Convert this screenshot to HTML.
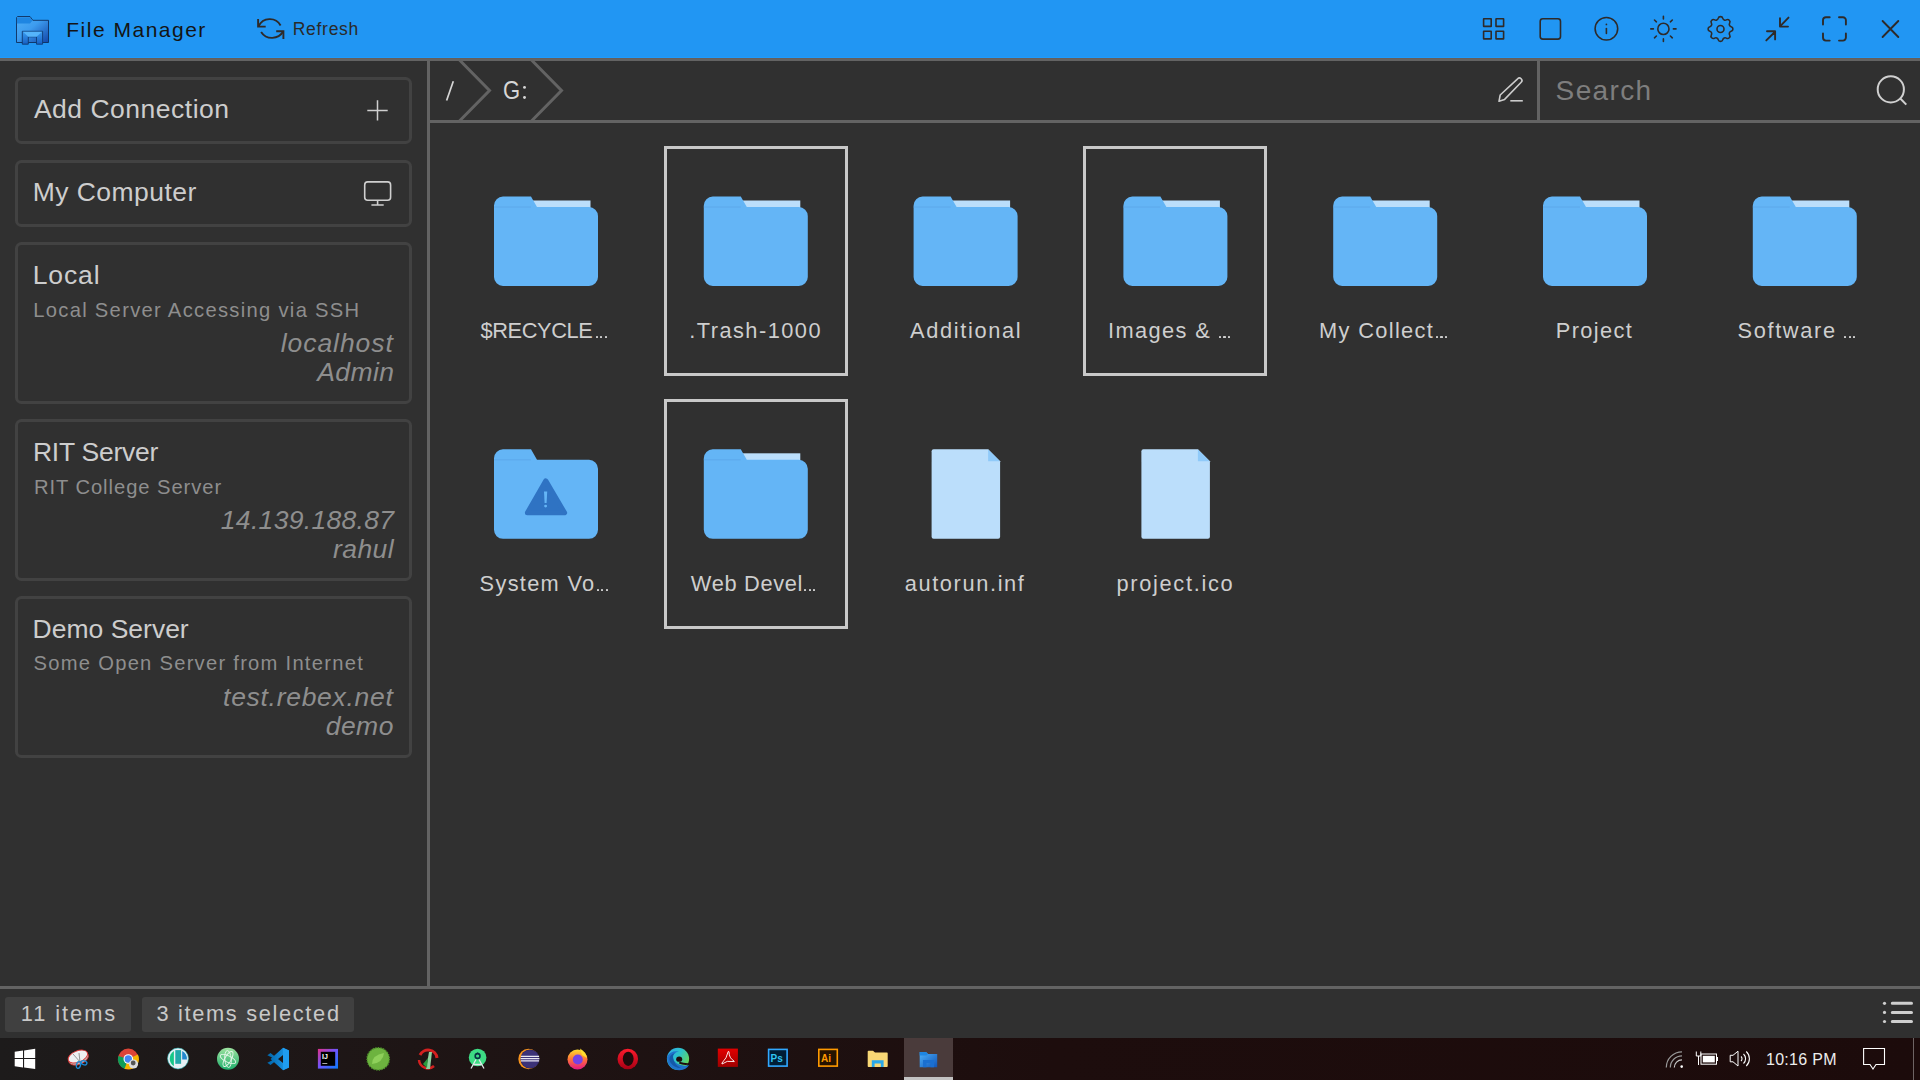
<!DOCTYPE html>
<html><head><meta charset="utf-8"><style>
html,body{margin:0;padding:0;width:1920px;height:1080px;overflow:hidden;background:#303030;font-family:"Liberation Sans", sans-serif;}
.t{position:absolute;white-space:pre;}
svg{position:absolute;overflow:visible;}
</style></head><body>
<div style="position:absolute;left:0px;top:0px;width:1920px;height:58px;background:#2196f3"></div>
<div style="position:absolute;left:0px;top:57px;width:1920px;height:1px;background:#1e9bfd"></div>
<div style="position:absolute;left:0px;top:58px;width:1920px;height:1px;background:#665e5a"></div>
<div style="position:absolute;left:0px;top:59px;width:1920px;height:2px;background:#636363"></div>
<svg style="left:12px;top:12px;" width="42" height="36" viewBox="12 12 42 36">
<defs>
<linearGradient id="lg1" x1="0" y1="0" x2="1" y2="1"><stop offset="0" stop-color="#4fb0f7"/><stop offset="0.45" stop-color="#3d9cef"/><stop offset="1" stop-color="#1245a8"/></linearGradient>
<linearGradient id="lg2" x1="0" y1="0" x2="0" y2="1"><stop offset="0" stop-color="#3a9cf0"/><stop offset="1" stop-color="#1760c4"/></linearGradient>
</defs>
<path d="M16.5 17.5 L17.5 16.5 L30 16.5 L32.8 20.3 L48.5 20.3 L48.5 42.5 L16.5 42.5 Z" fill="url(#lg1)" stroke="#0d2f5e" stroke-width="0.9"/>
<path d="M16.9 17.2 L30 17.2 L32.5 20.5 L30 23.5 L16.9 23.5 Z" fill="#1e86e2"/>
<path d="M22.3 31.3 L42.6 31.3 L42.6 44.2 L36.5 44.2 L36.5 36.8 L28.3 36.8 L28.3 44.2 L22.3 44.2 Z" fill="url(#lg2)" stroke="#0e3a73" stroke-width="0.9"/>
<path d="M23 31.8 L42 31.8 L36.5 36.8 L28.3 36.8 Z" fill="#55b4fb"/>
</svg>
<div class="t" style="left:66.3px;top:18.60px;font-size:21px;line-height:21px;color:#141414;letter-spacing:1.5px;">File Manager</div>
<svg style="left:254px;top:15px;" width="34" height="28" viewBox="254 15 34 28">
<g fill="none" stroke="#2e2a29" stroke-width="1.9" stroke-linecap="butt">
<path d="M258.6 26.4 A12.3 12.3 0 0 1 280.6 25.5"/>
<path d="M261.1 31.9 A13 13 0 0 0 283.3 31.3"/>
<path d="M258.1 18.9 V26.6 H265.7"/>
<path d="M276.2 31.3 H283.4 V38.9"/>
</g></svg>
<div class="t" style="left:292.75px;top:21.00px;font-size:17.5px;line-height:17.5px;color:#2a2a2a;letter-spacing:0.708px;">Refresh</div>
<svg style="left:1478px;top:12px;" width="440" height="36" viewBox="1478 12 440 36">
<g fill="none" stroke="#2e2a29" stroke-width="1.6" stroke-linecap="round" stroke-linejoin="round">
<rect x="1483.6" y="18.8" width="7.6" height="7.6" rx="0.2"/>
<rect x="1496" y="18.8" width="7.6" height="7.6" rx="0.2"/>
<rect x="1483.6" y="31.3" width="7.6" height="7.6" rx="0.2"/>
<rect x="1496" y="31.3" width="7.6" height="7.6" rx="0.2"/>
<rect x="1540.2" y="18.8" width="20.3" height="20.3" rx="2.6"/>
<circle cx="1606.4" cy="28.75" r="11.3"/>
<path d="M1606.4 28.6 V33.5"/>
<circle cx="1663.4" cy="28.9" r="5.6"/>
<path d="M1663.4 16.3 V18.9 M1663.4 38.9 V41.5 M1650.8 28.9 H1653.4 M1673.4 28.9 H1676 M1654.5 20 L1656.4 21.8 M1670.4 36 L1672.3 37.8 M1654.5 37.8 L1656.4 36 M1670.4 21.8 L1672.3 20"/>
<circle cx="1720.5" cy="29" r="3.5"/>
</g>
<circle cx="1606.4" cy="24.4" r="0.85" fill="#2e2a29"/>
<g fill="none" stroke="#2e2a29" stroke-width="1.9" stroke-linecap="round" stroke-linejoin="round">
<path d="M1788.5 17.6 L1780.5 25.8 M1780 18.3 V26.6 H1788"/>
<path d="M1766.3 40.4 L1774.6 32.2 M1767 31.3 H1775.1 V39.4"/>
<path d="M1823 24.5 V20 A3 3 0 0 1 1826 17.2 H1829.7 M1839 17.2 H1842.8 A3 3 0 0 1 1845.9 20.3 V24.5 M1845.9 33.5 V37.6 A3 3 0 0 1 1842.8 40.6 H1839 M1829.7 40.6 H1826 A3 3 0 0 1 1823 37.6 V33.5"/>
<path d="M1882.6 21 L1898.3 37 M1898.3 21 L1882.6 37"/>
</g>
</svg>
<svg style="left:1700px;top:10px;" width="40" height="40" viewBox="1700 10 40 40"><g transform="translate(1720.5 29) scale(1.38) translate(-12 -12)"><path vector-effect="non-scaling-stroke" d="M10.325 4.317c.426 -1.756 2.924 -1.756 3.35 0a1.724 1.724 0 0 0 2.573 1.066c1.543 -.94 3.31 .826 2.37 2.37a1.724 1.724 0 0 0 1.065 2.572c1.756 .426 1.756 2.924 0 3.35a1.724 1.724 0 0 0 -1.066 2.573c.94 1.543 -.826 3.31 -2.37 2.37a1.724 1.724 0 0 0 -2.572 1.065c-.426 1.756 -2.924 1.756 -3.35 0a1.724 1.724 0 0 0 -2.573 -1.066c-1.543 .94 -3.31 -.826 -2.37 -2.37a1.724 1.724 0 0 0 -1.065 -2.572c-1.756 -.426 -1.756 -2.924 0 -3.35a1.724 1.724 0 0 0 1.066 -2.573c-.94 -1.543 .826 -3.31 2.37 -2.37c1 .608 2.296 .07 2.572 -1.065z" fill="none" stroke="#2e2a29" stroke-width="1.6"/></g></svg>
<div style="position:absolute;left:427px;top:61px;width:3px;height:925px;background:#636363"></div>
<div style="position:absolute;left:15px;top:77px;width:397px;height:67px;box-sizing:border-box;border:3px solid #424242;border-radius:6.5px;"></div>
<div style="position:absolute;left:15px;top:160px;width:397px;height:67px;box-sizing:border-box;border:3px solid #424242;border-radius:6.5px;"></div>
<div style="position:absolute;left:15px;top:242px;width:397px;height:162px;box-sizing:border-box;border:3px solid #424242;border-radius:6.5px;"></div>
<div style="position:absolute;left:15px;top:419px;width:397px;height:162px;box-sizing:border-box;border:3px solid #424242;border-radius:6.5px;"></div>
<div style="position:absolute;left:15px;top:596px;width:397px;height:162px;box-sizing:border-box;border:3px solid #424242;border-radius:6.5px;"></div>
<div class="t" style="left:33.9px;top:96.01px;font-size:26.5px;line-height:26.5px;color:#cdcdcd;letter-spacing:0.508px;">Add Connection</div>
<div class="t" style="left:32.7px;top:179.01px;font-size:26.5px;line-height:26.5px;color:#cdcdcd;letter-spacing:0.46px;">My Computer</div>
<div class="t" style="left:32.7px;top:262.01px;font-size:26.5px;line-height:26.5px;color:#cdcdcd;letter-spacing:0.9px;">Local</div>
<div class="t" style="left:33.2px;top:300.01px;font-size:20.2px;line-height:20.2px;color:#8e8e8e;letter-spacing:1.297px;">Local Server Accessing via SSH</div>
<div class="t" style="left:280.8px;top:330.01px;font-size:26.5px;line-height:26.5px;color:#8e8e8e;letter-spacing:0.925px;font-style:italic;">localhost</div>
<div class="t" style="left:317.3px;top:359.01px;font-size:26.5px;line-height:26.5px;color:#8e8e8e;letter-spacing:0.375px;font-style:italic;">Admin</div>
<div class="t" style="left:32.9px;top:439.01px;font-size:26.5px;line-height:26.5px;color:#cdcdcd;letter-spacing:-0.244px;">RIT Server</div>
<div class="t" style="left:33.9px;top:477.01px;font-size:20.2px;line-height:20.2px;color:#8e8e8e;letter-spacing:0.941px;">RIT College Server</div>
<div class="t" style="left:220.8px;top:507.01px;font-size:26.5px;line-height:26.5px;color:#8e8e8e;letter-spacing:0.317px;font-style:italic;">14.139.188.87</div>
<div class="t" style="left:332.9px;top:536.01px;font-size:26.5px;line-height:26.5px;color:#8e8e8e;letter-spacing:0.475px;font-style:italic;">rahul</div>
<div class="t" style="left:32.6px;top:616.01px;font-size:26.5px;line-height:26.5px;color:#cdcdcd;letter-spacing:0.0px;">Demo Server</div>
<div class="t" style="left:33.6px;top:653.01px;font-size:20.2px;line-height:20.2px;color:#8e8e8e;letter-spacing:1.252px;">Some Open Server from Internet</div>
<div class="t" style="left:223.1px;top:684.01px;font-size:26.5px;line-height:26.5px;color:#8e8e8e;letter-spacing:0.7px;font-style:italic;">test.rebex.net</div>
<div class="t" style="left:325.7px;top:713.01px;font-size:26.5px;line-height:26.5px;color:#8e8e8e;letter-spacing:0.467px;font-style:italic;">demo</div>
<svg style="left:360px;top:95px;" width="35" height="35" viewBox="360 95 35 35"><path d="M367.3 110.6 H387.7 M377.5 100.3 V120.6" stroke="#cfcfcf" stroke-width="1.5" fill="none"/></svg>
<svg style="left:358px;top:175px;" width="40" height="35" viewBox="358 175 40 35"><g fill="none" stroke="#cfcfcf" stroke-width="1.6"><rect x="364.7" y="181.9" width="25.9" height="18.4" rx="3"/><path d="M377.6 200.3 V205 M371.4 205 H383.7"/></g></svg>
<div style="position:absolute;left:430px;top:120px;width:1490px;height:3px;background:#636363"></div>
<div style="position:absolute;left:1537px;top:61px;width:3px;height:59px;background:#636363"></div>
<svg style="left:430px;top:61px;" width="200" height="60" viewBox="430 61 200 60"><g fill="none" stroke="#636363" stroke-width="3" stroke-linejoin="miter"><path d="M459.5 60 L489.5 90.5 L459.5 121"/><path d="M531.5 60 L561.5 90.5 L531.5 121"/></g></svg>
<div class="t" style="left:502.8px;top:77.90px;font-size:25px;line-height:25px;color:#d6d6d6;letter-spacing:0.0px;transform:scaleX(0.88);transform-origin:1px 0;">G</div>
<svg style="left:440px;top:75px;" width="95" height="30" viewBox="440 75 95 30"><path d="M446.6 100.5 L453.3 81.3" stroke="#d6d6d6" stroke-width="1.7"/><circle cx="524.5" cy="87.4" r="1.45" fill="#d6d6d6"/><circle cx="524.5" cy="97.5" r="1.45" fill="#d6d6d6"/></svg>
<svg style="left:1494px;top:74px;" width="34" height="34" viewBox="1494 74 34 34"><g fill="none" stroke="#cccccc" stroke-width="1.6" stroke-linejoin="round" stroke-linecap="butt"><path d="M1499 101.3 L1500.2 95 L1517.6 78.8 A2.1 2.1 0 0 1 1521.2 82.3 L1504.6 99.4 Z"/><path d="M1510.3 100.8 H1522.8"/></g></svg>
<div class="t" style="left:1555.6px;top:76.81px;font-size:28px;line-height:28px;color:#7e7e7e;letter-spacing:1.36px;">Search</div>
<svg style="left:1870px;top:70px;" width="45" height="45" viewBox="1870 70 45 45"><g fill="none" stroke="#d0d0d0" stroke-width="2"><circle cx="1890.8" cy="89.4" r="13.1"/><path d="M1900.3 98.5 L1906.3 104.6"/></g></svg>
<svg style="left:430px;top:123px;" width="1490" height="520" viewBox="430 123 1490 520"><g>
<rect x="531.0" y="200.5" width="59.5" height="20" fill="#bbdefb"/>
<path d="M503.0 196.5 H531.0 L537.0 207.0 H589.0 A9 9 0 0 1 598.0 216.0 V277.0 A9 9 0 0 1 589.0 286.0 H503.0 A9 9 0 0 1 494.0 277.0 V205.5 A9 9 0 0 1 503.0 196.5 Z" fill="#64b5f6"/>
<path d="M494.0 207.0 H531.0" stroke="#5aa6e8" stroke-width="0.8"/>
</g><g>
<rect x="740.8" y="200.5" width="59.5" height="20" fill="#bbdefb"/>
<path d="M712.8 196.5 H740.8 L746.8 207.0 H798.8 A9 9 0 0 1 807.8 216.0 V277.0 A9 9 0 0 1 798.8 286.0 H712.8 A9 9 0 0 1 703.8 277.0 V205.5 A9 9 0 0 1 712.8 196.5 Z" fill="#64b5f6"/>
<path d="M703.8 207.0 H740.8" stroke="#5aa6e8" stroke-width="0.8"/>
</g><g>
<rect x="950.6" y="200.5" width="59.5" height="20" fill="#bbdefb"/>
<path d="M922.6 196.5 H950.6 L956.6 207.0 H1008.6 A9 9 0 0 1 1017.6 216.0 V277.0 A9 9 0 0 1 1008.6 286.0 H922.6 A9 9 0 0 1 913.6 277.0 V205.5 A9 9 0 0 1 922.6 196.5 Z" fill="#64b5f6"/>
<path d="M913.6 207.0 H950.6" stroke="#5aa6e8" stroke-width="0.8"/>
</g><g>
<rect x="1160.4" y="200.5" width="59.5" height="20" fill="#bbdefb"/>
<path d="M1132.4 196.5 H1160.4 L1166.4 207.0 H1218.4 A9 9 0 0 1 1227.4 216.0 V277.0 A9 9 0 0 1 1218.4 286.0 H1132.4 A9 9 0 0 1 1123.4 277.0 V205.5 A9 9 0 0 1 1132.4 196.5 Z" fill="#64b5f6"/>
<path d="M1123.4 207.0 H1160.4" stroke="#5aa6e8" stroke-width="0.8"/>
</g><g>
<rect x="1370.2" y="200.5" width="59.5" height="20" fill="#bbdefb"/>
<path d="M1342.2 196.5 H1370.2 L1376.2 207.0 H1428.2 A9 9 0 0 1 1437.2 216.0 V277.0 A9 9 0 0 1 1428.2 286.0 H1342.2 A9 9 0 0 1 1333.2 277.0 V205.5 A9 9 0 0 1 1342.2 196.5 Z" fill="#64b5f6"/>
<path d="M1333.2 207.0 H1370.2" stroke="#5aa6e8" stroke-width="0.8"/>
</g><g>
<rect x="1580.0" y="200.5" width="59.5" height="20" fill="#bbdefb"/>
<path d="M1552.0 196.5 H1580.0 L1586.0 207.0 H1638.0 A9 9 0 0 1 1647.0 216.0 V277.0 A9 9 0 0 1 1638.0 286.0 H1552.0 A9 9 0 0 1 1543.0 277.0 V205.5 A9 9 0 0 1 1552.0 196.5 Z" fill="#64b5f6"/>
<path d="M1543.0 207.0 H1580.0" stroke="#5aa6e8" stroke-width="0.8"/>
</g><g>
<rect x="1789.8" y="200.5" width="59.5" height="20" fill="#bbdefb"/>
<path d="M1761.8000000000002 196.5 H1789.8000000000002 L1795.8000000000002 207.0 H1847.8000000000002 A9 9 0 0 1 1856.8000000000002 216.0 V277.0 A9 9 0 0 1 1847.8000000000002 286.0 H1761.8000000000002 A9 9 0 0 1 1752.8000000000002 277.0 V205.5 A9 9 0 0 1 1761.8000000000002 196.5 Z" fill="#64b5f6"/>
<path d="M1752.8000000000002 207.0 H1789.8000000000002" stroke="#5aa6e8" stroke-width="0.8"/>
</g><g>

<path d="M503 449.3 H531 L537 459.8 H589 A9 9 0 0 1 598 468.8 V529.8 A9 9 0 0 1 589 538.8 H503 A9 9 0 0 1 494 529.8 V458.3 A9 9 0 0 1 503 449.3 Z" fill="#64b5f6"/>
<path d="M494 459.8 H531" stroke="#5aa6e8" stroke-width="0.8"/>
<path d="M545.8 480.8 L564.6 512.8 L527.4 512.8 Z" fill="#2f73c3" stroke="#2f73c3" stroke-width="5" stroke-linejoin="round"/><path d="M544 491.40000000000003 H547.2 L546.6 503.0 H544.6 Z" fill="#64b5f6"/><circle cx="545.6" cy="506.1" r="1.45" fill="#64b5f6"/></g><g>
<rect x="740.8" y="453.3" width="59.5" height="20" fill="#bbdefb"/>
<path d="M712.8 449.3 H740.8 L746.8 459.8 H798.8 A9 9 0 0 1 807.8 468.8 V529.8 A9 9 0 0 1 798.8 538.8 H712.8 A9 9 0 0 1 703.8 529.8 V458.3 A9 9 0 0 1 712.8 449.3 Z" fill="#64b5f6"/>
<path d="M703.8 459.8 H740.8" stroke="#5aa6e8" stroke-width="0.8"/>
</g><path d="M933.6 449.3 H988.1 L1000.1 461.3 V536.8 A2 2 0 0 1 998.1 538.8 H933.6 A2 2 0 0 1 931.6 536.8 V451.3 A2 2 0 0 1 933.6 449.3 Z" fill="#bbdefb"/><path d="M988.1 449.3 L1000.1 461.3 H988.1 Z" fill="#90caf9"/><path d="M1143.4 449.3 H1197.9 L1209.9 461.3 V536.8 A2 2 0 0 1 1207.9 538.8 H1143.4 A2 2 0 0 1 1141.4 536.8 V451.3 A2 2 0 0 1 1143.4 449.3 Z" fill="#bbdefb"/><path d="M1197.9 449.3 L1209.9 461.3 H1197.9 Z" fill="#90caf9"/></svg>
<div style="position:absolute;left:664px;top:146px;width:184px;height:230px;box-sizing:border-box;border:3px solid #c8c8c8;"></div>
<div style="position:absolute;left:1083px;top:146px;width:184px;height:230px;box-sizing:border-box;border:3px solid #c8c8c8;"></div>
<div style="position:absolute;left:664px;top:399px;width:184px;height:230px;box-sizing:border-box;border:3px solid #c8c8c8;"></div>
<div class="t" style="left:480.4px;top:320.00px;font-size:21.8px;line-height:21.8px;color:#cecece;letter-spacing:-0.371px;">$RECYCLE</div>
<div style="position:absolute;left:595.60px;top:335.60px;width:2.3px;height:2.3px;border-radius:0.6px;background:#cecece"></div>
<div style="position:absolute;left:600.05px;top:335.60px;width:2.3px;height:2.3px;border-radius:0.6px;background:#cecece"></div>
<div style="position:absolute;left:604.50px;top:335.60px;width:2.3px;height:2.3px;border-radius:0.6px;background:#cecece"></div>
<div class="t" style="left:689.2px;top:320.00px;font-size:21.8px;line-height:21.8px;color:#cecece;letter-spacing:1.46px;">.Trash-1000</div>
<div class="t" style="left:910.0px;top:320.00px;font-size:21.8px;line-height:21.8px;color:#cecece;letter-spacing:1.656px;">Additional</div>
<div class="t" style="left:1108.0px;top:320.00px;font-size:21.8px;line-height:21.8px;color:#cecece;letter-spacing:1.386px;">Images &amp;</div>
<div style="position:absolute;left:1219.00px;top:335.60px;width:2.3px;height:2.3px;border-radius:0.6px;background:#cecece"></div>
<div style="position:absolute;left:1223.45px;top:335.60px;width:2.3px;height:2.3px;border-radius:0.6px;background:#cecece"></div>
<div style="position:absolute;left:1227.90px;top:335.60px;width:2.3px;height:2.3px;border-radius:0.6px;background:#cecece"></div>
<div class="t" style="left:1319.1px;top:320.00px;font-size:21.8px;line-height:21.8px;color:#cecece;letter-spacing:1.333px;">My Collect</div>
<div style="position:absolute;left:1435.80px;top:335.60px;width:2.3px;height:2.3px;border-radius:0.6px;background:#cecece"></div>
<div style="position:absolute;left:1440.25px;top:335.60px;width:2.3px;height:2.3px;border-radius:0.6px;background:#cecece"></div>
<div style="position:absolute;left:1444.70px;top:335.60px;width:2.3px;height:2.3px;border-radius:0.6px;background:#cecece"></div>
<div class="t" style="left:1555.8px;top:320.00px;font-size:21.8px;line-height:21.8px;color:#cecece;letter-spacing:1.367px;">Project</div>
<div class="t" style="left:1737.5px;top:320.00px;font-size:21.8px;line-height:21.8px;color:#cecece;letter-spacing:1.643px;">Software</div>
<div style="position:absolute;left:1844.20px;top:335.60px;width:2.3px;height:2.3px;border-radius:0.6px;background:#cecece"></div>
<div style="position:absolute;left:1848.65px;top:335.60px;width:2.3px;height:2.3px;border-radius:0.6px;background:#cecece"></div>
<div style="position:absolute;left:1853.10px;top:335.60px;width:2.3px;height:2.3px;border-radius:0.6px;background:#cecece"></div>
<div class="t" style="left:479.6px;top:573.00px;font-size:21.8px;line-height:21.8px;color:#cecece;letter-spacing:1.3px;">System Vo</div>
<div style="position:absolute;left:596.70px;top:588.60px;width:2.3px;height:2.3px;border-radius:0.6px;background:#cecece"></div>
<div style="position:absolute;left:601.15px;top:588.60px;width:2.3px;height:2.3px;border-radius:0.6px;background:#cecece"></div>
<div style="position:absolute;left:605.60px;top:588.60px;width:2.3px;height:2.3px;border-radius:0.6px;background:#cecece"></div>
<div class="t" style="left:690.8px;top:573.00px;font-size:21.8px;line-height:21.8px;color:#cecece;letter-spacing:0.681px;">Web Devel</div>
<div style="position:absolute;left:804.20px;top:588.60px;width:2.3px;height:2.3px;border-radius:0.6px;background:#cecece"></div>
<div style="position:absolute;left:808.65px;top:588.60px;width:2.3px;height:2.3px;border-radius:0.6px;background:#cecece"></div>
<div style="position:absolute;left:813.10px;top:588.60px;width:2.3px;height:2.3px;border-radius:0.6px;background:#cecece"></div>
<div class="t" style="left:904.7px;top:573.00px;font-size:21.8px;line-height:21.8px;color:#cecece;letter-spacing:1.62px;">autorun.inf</div>
<div class="t" style="left:1116.5px;top:573.00px;font-size:21.8px;line-height:21.8px;color:#cecece;letter-spacing:1.68px;">project.ico</div>
<div style="position:absolute;left:0px;top:986px;width:1920px;height:3px;background:#636363"></div>
<div style="position:absolute;left:5px;top:997px;width:126px;height:35px;background:#404040;border-radius:3px"></div>
<div style="position:absolute;left:142px;top:997px;width:212px;height:35px;background:#404040;border-radius:3px"></div>
<div class="t" style="left:20.8px;top:1003.00px;font-size:21.8px;line-height:21.8px;color:#c8c8c8;letter-spacing:1.943px;">11 items</div>
<div class="t" style="left:156.5px;top:1003.00px;font-size:21.8px;line-height:21.8px;color:#c8c8c8;letter-spacing:1.667px;">3 items selected</div>
<svg style="left:1875px;top:1000px;" width="40" height="30" viewBox="1875 1000 40 30"><g fill="#cfcfcf"><circle cx="1884.5" cy="1003.3" r="1.6"/><circle cx="1884.5" cy="1012.4" r="1.6"/><circle cx="1884.5" cy="1021.5" r="1.6"/></g><g stroke="#cfcfcf" stroke-width="3" stroke-linecap="round"><path d="M1892.3 1003.3 H1911.5 M1892.3 1012.4 H1911.5 M1892.3 1021.5 H1911.5"/></g></svg>
<div style="position:absolute;left:0px;top:1038px;width:1920px;height:42px;background:linear-gradient(90deg,#1d1b1b 0%,#1e1414 25%,#1d0d0d 55%,#1c0b0b 100%)"></div>
<div style="position:absolute;left:904px;top:1038px;width:49px;height:42px;background:#4a3b3b"></div>
<div style="position:absolute;left:904px;top:1077px;width:49px;height:3px;background:#c3c3c3"></div>
<div class="t" style="left:1766.0px;top:1052.00px;font-size:16px;line-height:16px;color:#ededed;letter-spacing:0.286px;">10:16 PM</div>
<svg style="left:0px;top:1038px;" width="1920" height="42" viewBox="0 1038 1920 42">
<defs>
<linearGradient id="tbvs" x1="0" y1="0" x2="1" y2="0"><stop offset="0" stop-color="#0065a9"/><stop offset="1" stop-color="#1f9cf0"/></linearGradient>
<linearGradient id="tbij" x1="0" y1="0" x2="1" y2="1"><stop offset="0" stop-color="#e0318a"/><stop offset="0.5" stop-color="#6b57ff"/><stop offset="1" stop-color="#087cfa"/></linearGradient>
<linearGradient id="tbat" x1="0" y1="0" x2="0" y2="1"><stop offset="0" stop-color="#9ee3a0"/><stop offset="1" stop-color="#1fae6c"/></linearGradient>
<linearGradient id="tbff" x1="0" y1="0" x2="0" y2="1"><stop offset="0" stop-color="#ffdd2d"/><stop offset="0.5" stop-color="#ff7139"/><stop offset="1" stop-color="#e31587"/></linearGradient>
<linearGradient id="tbop" x1="0" y1="0" x2="0" y2="1"><stop offset="0" stop-color="#ff1b2d"/><stop offset="1" stop-color="#a70014"/></linearGradient>
<linearGradient id="tbed" x1="0" y1="0" x2="1" y2="1"><stop offset="0" stop-color="#35c1f1"/><stop offset="0.6" stop-color="#1e88d8"/><stop offset="1" stop-color="#114a8b"/></linearGradient>
<linearGradient id="tbac" x1="0" y1="0" x2="0" y2="1"><stop offset="0" stop-color="#e30000"/><stop offset="1" stop-color="#a00000"/></linearGradient>
<linearGradient id="tbfm" x1="0" y1="0" x2="1" y2="1"><stop offset="0" stop-color="#4db2fb"/><stop offset="1" stop-color="#1155b8"/></linearGradient>
</defs>
<!-- windows -->
<path d="M14.7 1051.8 L23 1050.6 V1057.9 H14.7 Z M24.1 1050.4 L35.2 1048.7 V1057.9 H24.1 Z M14.7 1058.9 H23 V1067.4 L14.7 1066.3 Z M24.1 1058.9 H35.2 V1069 L24.1 1067.6 Z" fill="#ffffff"/>
<!-- snipping -->
<g transform="rotate(-22 78 1057)">
<ellipse cx="78" cy="1058.5" rx="10.3" ry="6" fill="#b9b9b9" stroke="#d33" stroke-width="0.8"/>
<ellipse cx="78" cy="1056.5" rx="10.3" ry="5.6" fill="#eef0f2" stroke="#d33" stroke-width="0.9"/>
</g>
<path d="M73 1054 L81 1063 M79 1053 L80 1062" stroke="#8a8a8a" stroke-width="0.9"/>
<ellipse cx="78.5" cy="1065" rx="2" ry="3.4" fill="none" stroke="#1a8ad8" stroke-width="1.3" transform="rotate(15 78.5 1065)"/>
<ellipse cx="84" cy="1062.8" rx="3" ry="2" fill="none" stroke="#1a8ad8" stroke-width="1.3" transform="rotate(20 84 1062.8)"/>
<!-- chrome -->
<circle cx="128.3" cy="1059" r="10.4" fill="#db4437"/>
<path d="M128.3 1059 L118.3 1056 A10.4 10.4 0 0 0 125 1069 Z" fill="#0f9d58"/>
<path d="M128.3 1059 L137.9 1054.5 A10.4 10.4 0 0 1 130 1069.3 L124.5 1069 Z" fill="#f4b400"/>
<circle cx="128.3" cy="1059" r="4.8" fill="#fff"/>
<circle cx="128.3" cy="1059" r="3.7" fill="#4285f4"/>
<circle cx="133.5" cy="1064" r="4.6" fill="#dcdcdc"/>
<circle cx="133.2" cy="1063" r="2.4" fill="#555"/>
<!-- clockify-like -->
<circle cx="178" cy="1058.5" r="10.4" fill="#e6f0f5" stroke="#36c9c9" stroke-width="0.6"/>
<path d="M173.9 1051.1 A8.9 8.9 0 0 0 173.9 1066.2 Z" fill="#16c888"/>
<rect x="175.3" y="1050.1" width="5.8" height="13.7" fill="#20aaaa"/>
<path d="M182.2 1051 A9 9 0 0 1 186.9 1059.5 H182.2 Z" fill="#2089d0"/>
<!-- atom -->
<circle cx="228" cy="1058.8" r="11" fill="url(#tbat)"/>
<g fill="none" stroke="#e8f8ec" stroke-width="0.9">
<ellipse cx="228" cy="1059" rx="8.5" ry="3.2" transform="rotate(25 228 1059)"/>
<ellipse cx="228" cy="1059" rx="8.5" ry="3.2" transform="rotate(-60 228 1059)"/>
<ellipse cx="228" cy="1059" rx="8.5" ry="3.2" transform="rotate(85 228 1059)"/>
</g>
<!-- vscode -->
<path d="M283 1047.8 L289 1050.6 V1067.4 L283 1070.2 L270.5 1059 Z M270.5 1053 L283 1063 V1055 L270.5 1065 L267.3 1062.8 L275 1059 L267.3 1055.2 Z" fill="url(#tbvs)"/>
<path d="M283 1047.8 L289 1050.6 V1067.4 L283 1070.2 Z" fill="#1f9cf0"/>
<!-- intellij -->
<rect x="317.9" y="1048.9" width="20.1" height="19.7" fill="url(#tbij)"/>
<rect x="320.8" y="1051.8" width="14.4" height="14" fill="#000"/>
<text x="322" y="1058.7" font-family="Liberation Sans" font-weight="bold" font-size="7" fill="#fff">IJ</text>
<rect x="322.3" y="1063" width="5" height="0.9" fill="#bbb"/>
<!-- spring -->
<circle cx="378.2" cy="1058.9" r="11.2" fill="#6db33f" stroke="#4c8f2a" stroke-width="1.4" stroke-dasharray="1.4 1.2"/>
<path d="M372 1064 Q372 1055 384 1053 Q383 1063 372 1064 Z" fill="#8ed05a"/>
<!-- git-ish -->
<path d="M420 1055 A9 9 0 0 1 437 1058" fill="none" stroke="#d42020" stroke-width="3"/>
<path d="M419 1060 A9 9 0 0 0 434 1066" fill="none" stroke="#d42020" stroke-width="2.5"/>
<path d="M426 1069 L429 1052 L432 1052 L430 1069 Z" fill="#8fd19e"/>
<path d="M423 1064 L428 1058 L427 1068 Z" fill="#2d9a3e"/>
<!-- android studio -->
<circle cx="477.6" cy="1057.5" r="8.8" fill="#3ddc84"/>
<circle cx="477.6" cy="1056" r="2.4" fill="none" stroke="#073042" stroke-width="1.6"/>
<path d="M477.6 1052.5 V1054" stroke="#073042" stroke-width="1.5"/>
<path d="M471 1068.5 L476 1059.5 M484 1068.5 L479 1059.5 M473 1064.5 H482" stroke="#e0e7ea" stroke-width="1.3"/>
<!-- eclipse -->
<circle cx="528.5" cy="1059" r="10.2" fill="#f7941e"/>
<circle cx="530" cy="1059" r="9.6" fill="#2c2255"/>
<circle cx="530" cy="1059" r="9.1" fill="#3c3278"/>
<path d="M520.9 1056.4 H539.1 M520.6 1058.6 H539.4 M520.9 1060.8 H539.1" stroke="#e8e6f2" stroke-width="1.2"/>
<!-- firefox -->
<circle cx="577.5" cy="1059.5" r="10" fill="url(#tbff)"/>
<circle cx="577.8" cy="1059.5" r="5" fill="#7542e5"/>
<path d="M580 1048.5 Q586 1052 587 1058 L582 1055 Z" fill="#ffdd2d"/>
<!-- opera -->
<ellipse cx="627.8" cy="1059" rx="10.3" ry="10.3" fill="url(#tbop)"/>
<ellipse cx="628.2" cy="1058.8" rx="5.4" ry="7.1" fill="#1e0b0c"/>
<!-- edge -->
<defs><linearGradient id="tbed2" x1="0" y1="0" x2="1" y2="0.6"><stop offset="0" stop-color="#2fa8ec"/><stop offset="0.55" stop-color="#2cc3c9"/><stop offset="1" stop-color="#66d75a"/></linearGradient></defs>
<circle cx="678" cy="1058.8" r="11.1" fill="url(#tbed2)"/>
<path d="M667 1057 Q667.5 1070 679.5 1070.2 Q686.5 1070 689 1065 Q684 1066.5 679 1064.5 Q672.5 1062 673 1056 Q674 1052 679 1051.5 Q670 1050.5 667 1057 Z" fill="#1f73cc"/>
<path d="M673 1057.5 Q672.5 1052.5 679 1052 Q667 1054 670 1062 Q674 1068 681 1068 Q674 1065 673 1057.5 Z" fill="#1459a8"/>
<ellipse cx="679.2" cy="1059.2" rx="3" ry="2.6" fill="#1e0b0c"/>
<path d="M679.5 1061.8 Q684 1063.5 689.3 1063.2 L689 1064.6 Q683.5 1065.5 679 1063.6 Z" fill="#1e0b0c"/>
<!-- acrobat -->
<rect x="717.8" y="1048.6" width="20.1" height="18.3" fill="url(#tbac)"/>
<path d="M722 1063 Q727 1058 728 1052 Q728.5 1050.5 729 1052 Q729 1058 734 1061 Q735 1062 733 1061.5 Q727 1060 722 1064 Z" fill="none" stroke="#fff" stroke-width="0.9"/>
<!-- photoshop -->
<rect x="768.6" y="1049.4" width="18.5" height="16.7" fill="#001e36" stroke="#31a8ff" stroke-width="1.6"/>
<text x="770.5" y="1062" font-family="Liberation Sans" font-weight="bold" font-size="10" fill="#31c5f0">Ps</text>
<!-- illustrator -->
<rect x="818.8" y="1049.4" width="18.5" height="16.7" fill="#261300" stroke="#ff9a00" stroke-width="1.6"/>
<text x="821" y="1062" font-family="Liberation Sans" font-weight="bold" font-size="10" fill="#ff9a00">Ai</text>
<!-- explorer -->
<path d="M867.7 1051.5 Q867.7 1050.7 868.5 1050.7 H873 L875 1052.5 H887 Q887.7 1052.5 887.7 1053.3 V1066 Q887.7 1066.9 887 1066.9 H868.5 Q867.7 1066.9 867.7 1066 Z" fill="#f8d775"/>
<path d="M871.8 1066.9 V1060.3 H883.6 V1066.9 H880.8 V1063.5 H874.6 V1066.9 Z" fill="#29a8ea"/>
<!-- active file manager -->
<path d="M919.7 1052 H926 L928 1054 H937.2 V1067.2 H919.7 Z" fill="url(#tbfm)"/>
<path d="M919.7 1052 H926 L928 1054 L926.5 1055.5 H919.7 Z" fill="#1e86e2"/>
<path d="M923 1060 H934 V1067.2 H930.5 V1063 H926.5 V1067.2 H923 Z" fill="#1a6fd0"/>
<!-- tray: wifi -->
<g fill="none" stroke-width="1.2">
<path d="M1666.3 1067.5 A15.7 15.7 0 0 1 1682 1051.8" stroke="#9a9a9a"/>
<path d="M1670.3 1067.5 A11.7 11.7 0 0 1 1682 1055.8" stroke="#9a9a9a"/>
<path d="M1674.3 1067.5 A7.7 7.7 0 0 1 1682 1059.8" stroke="#c8c8c8"/>
</g>
<circle cx="1681.7" cy="1066.6" r="1.3" fill="#fff"/>
<!-- battery -->
<rect x="1701" y="1054" width="15.5" height="10.2" fill="none" stroke="#fff" stroke-width="1"/>
<rect x="1702.8" y="1055.8" width="12" height="6.6" fill="#fff"/>
<rect x="1716.5" y="1057" width="1.5" height="4" fill="#fff"/>
<path d="M1696.3 1051.5 V1056 H1700.8 V1051.5 M1698.5 1056 V1065" fill="none" stroke="#fff" stroke-width="1"/>
<!-- volume -->
<path d="M1730.2 1055.3 H1733 L1738 1051.2 V1066 L1733 1061.8 H1730.2 Z" fill="none" stroke="#fff" stroke-width="1"/>
<path d="M1741 1056.5 A3 3 0 0 1 1741 1061 M1743.5 1054 A6.5 6.5 0 0 1 1743.5 1063.5 M1746.3 1051.5 A10 10 0 0 1 1746.3 1066" fill="none" stroke="#fff" stroke-width="1.1"/>
<!-- notification -->
<path d="M1863.6 1048.5 H1884.5 V1064.5 H1876 L1873 1069 L1870 1064.5 H1863.6 Z" fill="none" stroke="#fff" stroke-width="1.1"/>
<rect x="1913" y="1038" width="1" height="42" fill="#6e6464"/>
</svg>
</body></html>
